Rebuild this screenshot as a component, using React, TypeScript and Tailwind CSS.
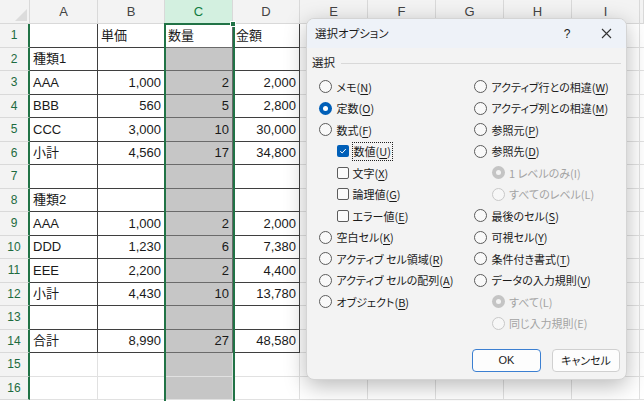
import React from 'react'

type Col = { label: string; w: string }

const cols: Col[] = [
  { label: 'A', w: 'w-[68px]' },
  { label: 'B', w: 'w-[67px]' },
  { label: 'C', w: 'w-[68px]' },
  { label: 'D', w: 'w-[67px]' },
  { label: 'E', w: 'w-[68px]' },
  { label: 'F', w: 'w-[68px]' },
  { label: 'G', w: 'w-[68px]' },
  { label: 'H', w: 'w-[68px]' },
  { label: 'I', w: 'w-[68px]' },
  { label: '', w: 'w-[4px]' },
]

const rows: string[][] = [
  ['', '単価', '数量', '金額'],
  ['種類1', '', '', ''],
  ['AAA', '1,000', '2', '2,000'],
  ['BBB', '560', '5', '2,800'],
  ['CCC', '3,000', '10', '30,000'],
  ['小計', '4,560', '17', '34,800'],
  ['', '', '', ''],
  ['種類2', '', '', ''],
  ['AAA', '1,000', '2', '2,000'],
  ['DDD', '1,230', '6', '7,380'],
  ['EEE', '2,200', '2', '4,400'],
  ['小計', '4,430', '10', '13,780'],
  ['', '', '', ''],
  ['合計', '8,990', '27', '48,580'],
  ['', '', '', ''],
  ['', '', '', ''],
]

function isNum(s: string) {
  return /^[0-9,]+$/.test(s)
}

function SheetRow({ idx, data }: { idx: number; data: string[] }) {
  const inTable = idx < 14
  return (
    <div className="flex h-[23.5px] shrink-0">
      <div className="w-[30px] shrink-0 flex items-center justify-center bg-[#f3f3f3] border-r-2 border-r-[#217346] border-b border-b-[#d9d9d9] text-[12px] text-[#1d6b40]">
        {idx + 1}
      </div>
      {cols.map((c, ci) => {
        const text = ci < 4 ? data[ci] : ''
        const tableCell = inTable && ci < 4
        const selected = ci === 2 && idx > 0
        return (
          <div
            key={ci}
            className={[
              c.w,
              'shrink-0 h-full flex items-center px-[3px] overflow-hidden whitespace-nowrap border-r border-b',
              tableCell ? (ci === 2 ? 'border-[#6a6a6a]' : 'border-[#3f3f3f]') : 'border-[#e1e1e1]',
              selected ? 'bg-[#c6c6c6]' : 'bg-white',
              isNum(text) ? 'justify-end' : 'justify-start',
            ].join(' ')}
          >
            {text}
          </div>
        )
      })}
    </div>
  )
}

function Radio({ checked, disabled }: { checked?: boolean; disabled?: boolean }) {
  if (checked && !disabled)
    return (
      <span className="w-[13px] h-[13px] rounded-full bg-[#005fb8] flex items-center justify-center shrink-0">
        <span className="w-[5px] h-[5px] rounded-full bg-white" />
      </span>
    )
  if (checked && disabled)
    return (
      <span className="w-[13px] h-[13px] rounded-full bg-[#c4c4c4] flex items-center justify-center shrink-0">
        <span className="w-[5px] h-[5px] rounded-full bg-[#f3f3f3]" />
      </span>
    )
  return (
    <span
      className={
        'w-[13px] h-[13px] rounded-full border shrink-0 ' +
        (disabled ? 'border-[#c8c8c8] bg-[#f7f7f7]' : 'border-[#5c5c5c] bg-[#f9f9f9]')
      }
    />
  )
}

function Check({ checked }: { checked?: boolean }) {
  if (checked)
    return (
      <span className="w-[12px] h-[12px] rounded-[2px] bg-[#005fb8] flex items-center justify-center shrink-0">
        <svg width="8" height="8" viewBox="0 0 8 8">
          <path d="M1.2 4.2 L3.2 6 L6.8 2" stroke="white" strokeWidth="1" fill="none" />
        </svg>
      </span>
    )
  return <span className="w-[12px] h-[12px] rounded-[2px] border border-[#5c5c5c] bg-[#fbfbfb] shrink-0" />
}

function Label({ pre, key_, post = ')', disabled }: { pre: string; key_: string; post?: string; disabled?: boolean }) {
  if (disabled)
    return (
      <span className="text-[#a3a3a3]">
        {pre}
        {key_}
        {post}
      </span>
    )
  return (
    <span>
      {pre}
      <span className="underline underline-offset-2">{key_}</span>
      {post}
    </span>
  )
}

type Opt = {
  kind: 'radio' | 'check'
  pre: string
  k: string
  indent?: boolean
  checked?: boolean
  disabled?: boolean
  focus?: boolean
}

const leftOpts: Opt[] = [
  { kind: 'radio', pre: 'メモ(', k: 'N' },
  { kind: 'radio', pre: '定数(', k: 'O', checked: true },
  { kind: 'radio', pre: '数式(', k: 'F' },
  { kind: 'check', pre: '数値(', k: 'U', indent: true, checked: true, focus: true },
  { kind: 'check', pre: '文字(', k: 'X', indent: true },
  { kind: 'check', pre: '論理値(', k: 'G', indent: true },
  { kind: 'check', pre: 'エラー値(', k: 'E', indent: true },
  { kind: 'radio', pre: '空白セル(', k: 'K' },
  { kind: 'radio', pre: 'アクティブ セル領域(', k: 'R' },
  { kind: 'radio', pre: 'アクティブ セルの配列(', k: 'A' },
  { kind: 'radio', pre: 'オブジェクト(', k: 'B' },
]

const rightOpts: Opt[] = [
  { kind: 'radio', pre: 'アクティブ行との相違(', k: 'W' },
  { kind: 'radio', pre: 'アクティブ列との相違(', k: 'M' },
  { kind: 'radio', pre: '参照元(', k: 'P' },
  { kind: 'radio', pre: '参照先(', k: 'D' },
  { kind: 'radio', pre: '1 レベルのみ(', k: 'I', indent: true, checked: true, disabled: true },
  { kind: 'radio', pre: 'すべてのレベル(', k: 'L', indent: true, disabled: true },
  { kind: 'radio', pre: '最後のセル(', k: 'S' },
  { kind: 'radio', pre: '可視セル(', k: 'Y' },
  { kind: 'radio', pre: '条件付き書式(', k: 'T' },
  { kind: 'radio', pre: 'データの入力規則(', k: 'V' },
  { kind: 'radio', pre: 'すべて(', k: 'L', indent: true, checked: true, disabled: true },
  { kind: 'radio', pre: '同じ入力規則(', k: 'E', indent: true, disabled: true },
]

function OptRow({ o }: { o: Opt }) {
  return (
    <div className={'h-[21.5px] flex items-center ' + (o.indent ? 'pl-[17.5px]' : '')}>
      {o.kind === 'radio' ? <Radio checked={o.checked} disabled={o.disabled} /> : <Check checked={o.checked} />}
      <span
        className={
          (o.kind === 'radio' ? 'ml-[4.5px] ' : 'ml-[4px] ') +
          (o.focus ? 'outline outline-1 outline-dotted outline-[#222] px-[1px] -ml-[0px]' : '')
        }
      >
        <Label pre={o.pre} key_={o.k} disabled={o.disabled} />
      </span>
    </div>
  )
}

function Dialog() {
  return (
    <div className="absolute left-[306px] top-[18px] w-[321px] h-[362px] rounded-[8px] overflow-hidden border border-[#d4d4d4] bg-[#f3f3f3] shadow-[0_6px_22px_rgba(0,0,0,0.28)] flex flex-col text-[11px] text-[#1b1b1b] [font-family:'Noto_Sans_CJK_JP',sans-serif] [font-feature-settings:'palt']">
      <div className="h-[29px] shrink-0 bg-[#eef2f8] flex items-center pl-[8px] pr-[14px] text-[11.5px]">
        <span className="flex-1">選択オプション</span>
        <span className="w-[16px] text-center mr-[26px] text-[12px] [font-family:'Liberation_Sans',sans-serif]">?</span>
        <svg width="11" height="11" viewBox="0 0 11 11">
          <path d="M1 1 L10 10 M10 1 L1 10" stroke="#333" strokeWidth="1.1" />
        </svg>
      </div>
      <div className="flex items-center h-[20px] mt-[5px] pl-[5px] pr-[5px] text-[11.5px]">
        <span>選択</span>
        <span className="flex-1 h-px bg-[#d8d8d8] ml-[6px]" />
      </div>
      <div className="flex mt-[3px] pl-[12px]">
        <div className="w-[155px] flex flex-col">
          {leftOpts.map((o, i) => (
            <OptRow key={i} o={o} />
          ))}
        </div>
        <div className="flex flex-col">
          {rightOpts.map((o, i) => (
            <OptRow key={i} o={o} />
          ))}
        </div>
      </div>
      <div className="mt-auto flex justify-end gap-[11px] pr-[6px] pb-[7px]">
        <button className="w-[69px] h-[23px] rounded-[4px] border-[1.5px] border-[#3b7fd1] bg-[#fdfdfd] text-[11px] [font-family:'Liberation_Sans',sans-serif]">
          OK
        </button>
        <button className="w-[68px] h-[23px] rounded-[4px] border border-[#d0d0d0] bg-[#fdfdfd] text-[11px]">
          キャンセル
        </button>
      </div>
    </div>
  )
}

export default function App() {
  return (
    <div className="relative w-[644px] h-[401px] overflow-hidden bg-white text-[13px] text-[#1a1a1a] [font-family:'Liberation_Sans','Noto_Sans_CJK_JP',sans-serif]">
      <div className="flex flex-col">
        <div className="flex h-[24px] shrink-0">
          <div className="w-[30px] shrink-0 relative bg-[#f3f3f3] border-r border-b border-[#d9d9d9]">
            <svg className="absolute right-[2px] bottom-[2px]" width="12" height="12" viewBox="0 0 12 12">
              <path d="M12 0 L12 12 L0 12 Z" fill="#dcdcdc" />
            </svg>
          </div>
          {cols.map((c) => (
            <div
              key={c.label}
              className={[
                c.w,
                'shrink-0 flex items-center justify-center border-r border-b',
                c.label === 'C'
                  ? 'bg-[#d3f0e0] text-[#107c41] border-r-[#d9d9d9] border-b-[#217346]'
                  : 'bg-[#f3f3f3] text-[#444] border-[#d9d9d9]',
              ].join(' ')}
            >
              {c.label}
            </div>
          ))}
        </div>
        {rows.map((r, i) => (
          <SheetRow key={i} idx={i} data={r} />
        ))}
      </div>
      <div className="absolute left-[164px] top-[23px] w-[71px] bottom-0 border-2 border-b-0 border-[#217346]" />
      <div className="absolute left-[230px] top-[21px] w-[6px] h-[6px] bg-[#217346] border border-white" />
      <Dialog />
    </div>
  )
}
